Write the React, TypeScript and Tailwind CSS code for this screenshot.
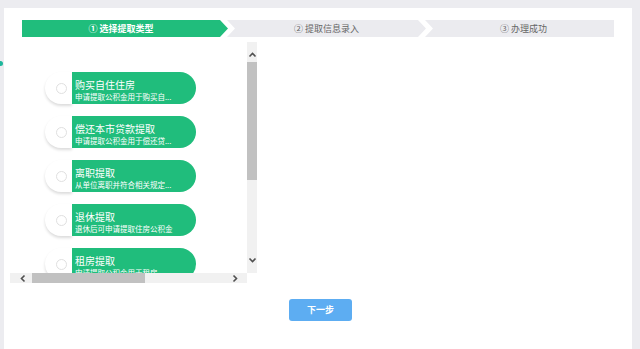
import React from 'react';

const items = [
  { title: '购买自住住房', desc: '申请提取公积金用于购买自...' },
  { title: '偿还本市贷款提取', desc: '申请提取公积金用于偿还贷...' },
  { title: '离职提取', desc: '从单位离职并符合相关规定...' },
  { title: '退休提取', desc: '退休后可申请提取住房公积金' },
  { title: '租房提取', desc: '申请提取公积金用于租房' },
];

const Chevron = ({ dir }: { dir: 'up' | 'down' | 'left' | 'right' }) => {
  const d = {
    up: 'M1.5 5.5 L4.5 2.5 L7.5 5.5',
    down: 'M1.5 2.5 L4.5 5.5 L7.5 2.5',
    left: 'M5.5 1.5 L2.5 4.5 L5.5 7.5',
    right: 'M2.5 1.5 L5.5 4.5 L2.5 7.5',
  }[dir];
  return (
    <svg width="9" height="9" viewBox="0 0 9 9">
      <path d={d} fill="none" stroke="#505050" strokeWidth="1.6" />
    </svg>
  );
};

const Steps = () => (
  <div className="flex ml-[18px] mt-[12px] h-[17px] text-[9px] leading-[17px]">
    <div className="w-[206px] bg-[#20bd7c] text-white font-bold flex justify-center pr-[8px] [clip-path:polygon(0_0,calc(100%-8px)_0,100%_50%,calc(100%-8px)_100%,0_100%)]">
      ① 选择提取类型
    </div>
    <div className="w-[199px] -ml-[1px] bg-[#ebebef] text-[#666] flex justify-center [clip-path:polygon(0_0,calc(100%-8px)_0,100%_50%,calc(100%-8px)_100%,0_100%,8px_50%)]">
      ② 提取信息录入
    </div>
    <div className="w-[189px] -ml-[1px] bg-[#ebebef] text-[#666] flex justify-center pl-[8px] [clip-path:polygon(0_0,100%_0,100%_100%,0_100%,8px_50%)]">
      ③ 办理成功
    </div>
  </div>
);

const Card = ({ title, desc }: { title: string; desc: string }) => (
  <div className="flex h-[32px] w-[151px] shrink-0">
    <div className="w-[27px] h-full rounded-l-full bg-white shadow-[0_2px_3px_rgba(0,0,0,0.14)] flex items-center pl-[11px]">
      <div className="w-[11px] h-[11px] rounded-full border border-[#e0e0e0] bg-white" />
    </div>
    <div className="flex-1 min-w-0 h-full rounded-r-full bg-[#20bd7c] text-white pl-[3px] pt-[6px] whitespace-nowrap">
      <div className="text-[10px] leading-[13px]">{title}</div>
      <div className="text-[7.5px] leading-[11px]">{desc}</div>
    </div>
  </div>
);

const ScrollBox = () => (
  <div className="ml-[6px] mt-[5px] w-[247px] h-[241px] grid grid-cols-[237px_10px] grid-rows-[231px_10px]">
    <div className="overflow-hidden bg-white pl-[35px] pt-[30px] flex flex-col gap-[12px]">
      {items.map((it) => (
        <Card key={it.title} {...it} />
      ))}
    </div>
    <div className="bg-[#f1f1f1] flex flex-col items-center">
      <div className="h-[20px] flex items-center pt-[6px]">
        <Chevron dir="up" />
      </div>
      <div className="w-[10px] h-[118px] bg-[#c1c1c1]" />
      <div className="flex-1" />
      <div className="h-[24px] flex items-center pb-[2px]">
        <Chevron dir="down" />
      </div>
    </div>
    <div className="bg-[#f1f1f1] flex items-center">
      <div className="w-[22px] flex justify-center pl-[4px]">
        <Chevron dir="left" />
      </div>
      <div className="w-[113px] h-full bg-[#c1c1c1]" />
      <div className="flex-1" />
      <div className="w-[22px] flex justify-center pr-[2px]">
        <Chevron dir="right" />
      </div>
    </div>
    <div className="bg-white" />
  </div>
);

export default function App() {
  return (
    <div className="relative h-[349px] w-[640px] overflow-hidden bg-[#ececf0] pl-[4px] pr-[8px] pt-[8px] font-['Noto_Sans_CJK_SC','Liberation_Sans',sans-serif]">
      <div className="absolute left-0 top-[61px] w-[3px] h-[5px] rounded-r-full bg-[#1fb79c]" />
      <div className="h-full bg-white flex flex-col">
        <Steps />
        <ScrollBox />
        <div className="flex justify-center pl-[5px] mt-[16px]">
          <button className="w-[63px] h-[22px] rounded-[3px] bg-[#5dadf2] text-white text-[9px] font-bold leading-[22px]">
            下一步
          </button>
        </div>
      </div>
    </div>
  );
}
